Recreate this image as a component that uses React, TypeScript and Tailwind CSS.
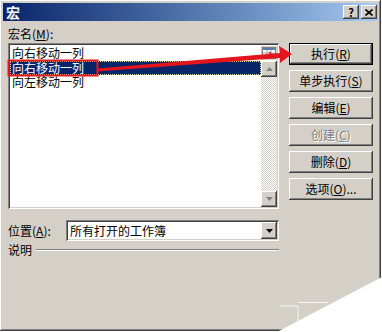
import * as React from 'react'

const raised =
  'shadow-[inset_-1px_-1px_#404040,inset_1px_1px_#ffffff,inset_-2px_-2px_#808080,inset_2px_2px_#d4d0c8]'
const sunken =
  'shadow-[inset_1px_1px_#808080,inset_-1px_-1px_#ffffff,inset_2px_2px_#404040,inset_-2px_-2px_#d4d0c8]'

const Mn: React.FC<{ k: string }> = ({ k }) => (
  <>
    (<span className="underline underline-offset-1">{k}</span>)
  </>
)

const buttons = [
  { label: '执行', key: 'R', isDefault: true },
  { label: '单步执行', key: 'S' },
  { label: '编辑', key: 'E' },
  { label: '创建', key: 'C', disabled: true },
  { label: '删除', key: 'D' },
  { label: '选项', key: 'O', suffix: '...' },
]

const Arrow: React.FC<{ up?: boolean }> = ({ up }) => (
  <svg width="7" height="4" viewBox="0 0 7 4">
    <polygon points={up ? '3.5,0 7,4 0,4' : '0,0 7,0 3.5,4'} fill={up ? '#808080' : '#000'} />
  </svg>
)

export default function App() {
  return (
    <div
      className="relative w-[382px] h-[332px] overflow-hidden bg-white text-[12px] leading-[14px] text-black"
      style={{ fontFamily: '"Noto Sans CJK SC", "Liberation Sans", sans-serif' }}
    >
      <div className={`w-[381px] h-[331px] bg-[#d4d0c8] p-[3px] flex flex-col ${raised}`}>
        {/* title bar */}
        <div className="h-[18px] flex items-center justify-between pl-[3px] pr-[1px] bg-linear-to-r from-[#0a246a] to-[#a6caf0]">
          <span className="text-white font-bold text-[14px] leading-[16px]">宏</span>
          <div className="flex gap-[2px]">
            <div className={`w-[16px] h-[14px] bg-[#d4d0c8] flex items-center justify-center text-[11px] font-bold leading-none ${raised}`}>
              ?
            </div>
            <div className={`w-[16px] h-[14px] bg-[#d4d0c8] flex items-center justify-center ${raised}`}>
              <svg width="8" height="7" viewBox="0 0 8 7">
                <path d="M0.5 0.5 L7.5 6.5 M7.5 0.5 L0.5 6.5" stroke="#000" strokeWidth="1.6" />
              </svg>
            </div>
          </div>
        </div>

        <div className="flex pl-[5px]">
          {/* left column */}
          <div className="w-[271px] flex flex-col">
            <div className="h-[22px] pt-[6px]">
              宏名<Mn k="M" />:
            </div>
            <div className={`h-[166px] bg-white p-[2px] flex flex-col ${sunken}`}>
              <div className="h-[16px] flex items-center">
                <span className="flex-1 pl-[2px]">向右移动一列</span>
                <div className="w-[16px] h-[14px] flex items-center justify-center bg-[#d4d0c8]">
                  <svg width="14" height="12" viewBox="0 0 14 12">
                    <rect x="0.5" y="0.5" width="13" height="11" fill="#fff" stroke="#808080" />
                    <rect x="1" y="1" width="12" height="2" fill="#5a7cb4" />
                    <path d="M1 6 H13 M5 3 V11 M9 3 V11" stroke="#a0a0a0" />
                    <path d="M7 5 L12 10 M12 7 V10 H9" stroke="#e01818" strokeWidth="1.5" fill="none" />
                  </svg>
                </div>
              </div>
              <div className="flex-1 flex">
                <div className="flex-1 flex flex-col">
                  <div className="h-[14px] bg-[#0a246a] text-white pl-[2px] outline-dotted outline-1 -outline-offset-1 outline-[#e8e0a0]">
                    向右移动一列
                  </div>
                  <div className="h-[14px] pl-[2px]">向左移动一列</div>
                </div>
                <div className="w-[16px] flex flex-col bg-[conic-gradient(#ffffff_25%,#d4d0c8_0_50%,#ffffff_0_75%,#d4d0c8_0)] bg-[length:2px_2px]">
                  <div className={`h-[16px] bg-[#d4d0c8] flex items-center justify-center ${raised}`}>
                    <Arrow up />
                  </div>
                  <div className="flex-1" />
                  <div className={`h-[16px] bg-[#d4d0c8] flex items-center justify-center ${raised}`}>
                    <svg width="7" height="4" viewBox="0 0 7 4">
                      <polygon points="0,0 7,0 3.5,4" fill="#808080" />
                    </svg>
                  </div>
                </div>
              </div>
            </div>

            <div className="mt-[11px] flex items-center">
              <div className="w-[58px]">
                位置<Mn k="A" />:
              </div>
              <div className={`w-[213px] h-[21px] bg-white p-[2px] flex items-center ${sunken}`}>
                <span className="flex-1 pl-[2px]">所有打开的工作簿</span>
                <div className={`w-[16px] h-[17px] bg-[#d4d0c8] flex items-center justify-center ${raised}`}>
                  <Arrow />
                </div>
              </div>
            </div>

            <div className="mt-[2px] h-[14px] flex items-center gap-[4px]">
              <span>说明</span>
              <div className="flex-1 h-0 border-t border-t-[#808080] border-b border-b-white" />
            </div>
          </div>

          {/* buttons */}
          <div className="ml-[10px] w-[84px] pt-[22px] flex flex-col gap-[5px]">
            {buttons.map((b) => (
              <div
                key={b.key}
                className={`h-[22px] bg-[#d4d0c8] flex items-center justify-center ${
                  b.isDefault ? 'border border-black' : ''
                } ${raised} ${b.disabled ? 'text-[#808080] [text-shadow:1px_1px_#ffffff]' : ''}`}
              >
                <span>
                  {b.label}
                  <Mn k={b.key} />
                  {b.suffix}
                </span>
              </div>
            ))}
          </div>
        </div>
      </div>

      {/* annotation and page curl overlay */}
      <svg className="absolute inset-0 pointer-events-none" width="382" height="332" viewBox="0 0 382 332">
        <rect x="8.5" y="60.5" width="89" height="15" fill="none" stroke="#e01c1c" strokeWidth="2" />
        <polygon points="97,68.5 280,53 279,46 292,54 280,63 280,58 97,71.5" fill="#e3141c" />
        <path d="M280 306 H298 V330 M298 302.5 H328" stroke="#ffffff" strokeWidth="1" fill="none" opacity="0.8" />
        <polygon points="382,277 382,332 277,332" fill="#ffffff" />
      </svg>
    </div>
  )
}
